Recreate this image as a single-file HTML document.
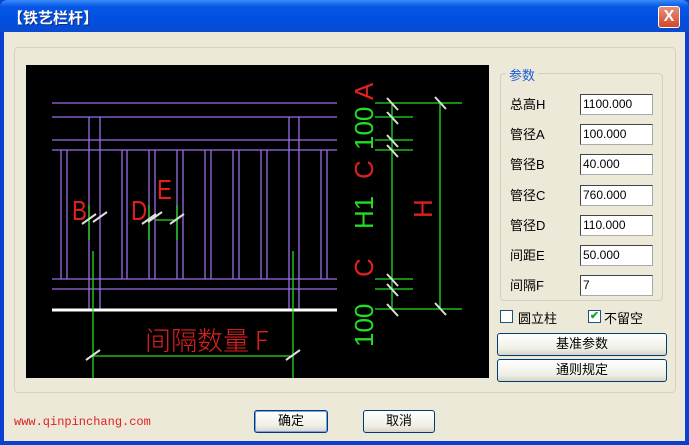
<!DOCTYPE html>
<html><head><meta charset="utf-8"><style>
*{margin:0;padding:0;box-sizing:border-box}
body{width:689px;height:445px;background:#0a3fd0;font-family:"Liberation Sans","Noto Sans CJK SC",sans-serif;font-size:13px;position:relative;overflow:hidden}
.title{position:absolute;left:0;top:0;width:689px;height:32px;background:linear-gradient(#3a8cf8,#0858e8 20%,#0050e0 60%,#0a4ad0);border-radius:7px 7px 0 0}
.title span{position:absolute;left:8px;top:7px;color:#fff;font-weight:bold;font-size:15px;text-shadow:1px 1px #0a2a80}
.close{position:absolute;left:658px;top:6px;width:22px;height:22px;border:1px solid #fff;border-radius:3px;background:linear-gradient(#e8907a,#d4462a);color:#fff;font-weight:bold;font-size:16px;text-align:center;line-height:20px}
.body{position:absolute;left:4px;top:32px;width:681px;height:409px;background:#ece9d8}
.panel{position:absolute;left:10px;top:15px;width:662px;height:346px;border:1px solid #d5d2c2;border-radius:4px}
.cv{position:absolute;left:26px;top:65px;width:463px;height:313px;background:#000}
.lbl{position:absolute;left:510px;font-size:13px}
.in{position:absolute;left:580px;width:73px;height:21px;background:#fff;border:1px solid #7f9db9;border-color:#444 #aaa #aaa #444;font-size:12px;padding:2px 2px;line-height:15px}
.grp{position:absolute;left:500px;top:73px;width:163px;height:228px;border:1px solid #d0d0bf;border-radius:4px}
.btn{position:absolute;border:1px solid #003c74;border-radius:3px;background:linear-gradient(#fff,#f0efe6 70%,#d8d5c6);text-align:center;font-size:13px}
</style></head><body>
<div class="title"><span>【铁艺栏杆】</span><div class="close">X</div></div>
<div class="body"></div>
<div class="panel" style="left:14px;top:47px"></div>
<div class="cv"></div>
<svg style="position:absolute;left:0;top:0" width="689" height="445">
<g stroke="#9a6ee8" stroke-width="1.3">
<line x1="52" y1="103" x2="337" y2="103"/><line x1="52" y1="117" x2="337" y2="117"/>
<line x1="52" y1="140" x2="337" y2="140"/><line x1="52" y1="150" x2="337" y2="150"/>
<line x1="52" y1="279" x2="337" y2="279"/><line x1="52" y1="289" x2="337" y2="289"/>
<line x1="89" y1="117" x2="89" y2="310"/><line x1="100" y1="117" x2="100" y2="310"/>
<line x1="289" y1="117" x2="289" y2="310"/><line x1="299" y1="117" x2="299" y2="310"/>
<g>
<line x1="61" y1="150" x2="61" y2="279"/><line x1="67" y1="150" x2="67" y2="279"/>
<line x1="122" y1="150" x2="122" y2="279"/><line x1="127" y1="150" x2="127" y2="279"/>
<line x1="149" y1="150" x2="149" y2="279"/><line x1="155" y1="150" x2="155" y2="279"/>
<line x1="177" y1="150" x2="177" y2="279"/><line x1="183" y1="150" x2="183" y2="279"/>
<line x1="205" y1="150" x2="205" y2="279"/><line x1="211" y1="150" x2="211" y2="279"/>
<line x1="233" y1="150" x2="233" y2="279"/><line x1="239" y1="150" x2="239" y2="279"/>
<line x1="261" y1="150" x2="261" y2="279"/><line x1="267" y1="150" x2="267" y2="279"/>
<line x1="321" y1="150" x2="321" y2="279"/><line x1="327" y1="150" x2="327" y2="279"/>
</g></g>
<line x1="52" y1="310" x2="337" y2="310" stroke="#fff" stroke-width="3"/>
<g stroke="#22dd22" stroke-width="1.3">
<line x1="93" y1="251" x2="93" y2="378"/><line x1="293" y1="251" x2="293" y2="378"/>
<line x1="93" y1="356" x2="293" y2="356"/>
<line x1="89" y1="205" x2="89" y2="240"/><line x1="149" y1="205" x2="149" y2="240"/><line x1="177" y1="205" x2="177" y2="240"/><line x1="155" y1="220" x2="177" y2="220"/>
<line x1="375" y1="103" x2="462" y2="103"/><line x1="375" y1="117" x2="413" y2="117"/>
<line x1="375" y1="140" x2="413" y2="140"/><line x1="375" y1="150" x2="413" y2="150"/>
<line x1="375" y1="279" x2="413" y2="279"/><line x1="375" y1="289" x2="413" y2="289"/>
<line x1="375" y1="309" x2="462" y2="309"/>
<line x1="392" y1="103" x2="392" y2="309"/><line x1="440" y1="103" x2="440" y2="309"/>
</g>
<g stroke="#ddd" stroke-width="2">
<line x1="86" y1="360" x2="100" y2="350"/><line x1="286" y1="360" x2="300" y2="350"/>
<line x1="82" y1="224" x2="96" y2="214"/><line x1="93" y1="222" x2="107" y2="212"/>
<line x1="142" y1="224" x2="156" y2="214"/><line x1="148" y1="222" x2="162" y2="212"/><line x1="170" y1="224" x2="184" y2="214"/>
<line x1="387" y1="98" x2="398" y2="110"/><line x1="387" y1="112" x2="398" y2="124"/><line x1="387" y1="135" x2="398" y2="147"/><line x1="387" y1="145" x2="398" y2="157"/>
<line x1="387" y1="274" x2="398" y2="286"/><line x1="387" y1="284" x2="398" y2="296"/><line x1="387" y1="304" x2="398" y2="316"/>
<line x1="435" y1="97" x2="446" y2="109"/><line x1="435" y1="303" x2="446" y2="315"/>
</g>
<g font-family="Liberation Sans,Noto Sans CJK SC,sans-serif" font-size="28">
<text x="72" y="220" fill="#e02020" transform="scale(0.8,1)" style="transform-origin:72px 220px">B</text>
<text x="131" y="220" fill="#e02020" transform="scale(0.8,1)" style="transform-origin:131px 220px">D</text>
<text x="157" y="199" fill="#e02020" transform="scale(0.8,1)" style="transform-origin:157px 199px">E</text>
<text x="145" y="350" fill="#e02020" font-size="26" font-family="Noto Sans CJK SC,sans-serif" font-weight="300">间隔数量 F</text>
<g transform="translate(373,347) rotate(-90)" font-size="26">
<text x="0" y="0" fill="#22dd22">100</text><text x="70" y="0" fill="#e02020">C</text><text x="118" y="0" fill="#22dd22">H1</text><text x="168" y="0" fill="#e02020">C</text><text x="197" y="0" fill="#22dd22">100</text><text x="247" y="0" fill="#e02020">A</text>
</g>
<text transform="translate(432,218) rotate(-90)" fill="#e02020" font-size="26">H</text>
</g>
</svg>
<div class="grp"></div>
<div style="position:absolute;left:506px;top:65px;background:#ece9d8;color:#1c5ad8;padding:0 3px;font-size:13px">参数</div>
<div class="lbl" style="top:94px">总高H</div><div class="in" style="top:94px">1100.000</div>
<div class="lbl" style="top:124px">管径A</div><div class="in" style="top:124px">100.000</div>
<div class="lbl" style="top:154px">管径B</div><div class="in" style="top:154px">40.000</div>
<div class="lbl" style="top:185px">管径C</div><div class="in" style="top:185px">760.000</div>
<div class="lbl" style="top:215px">管径D</div><div class="in" style="top:215px">110.000</div>
<div class="lbl" style="top:245px">间距E</div><div class="in" style="top:245px">50.000</div>
<div class="lbl" style="top:275px">间隔F</div><div class="in" style="top:275px">7</div>
<div style="position:absolute;left:500px;top:310px;width:13px;height:13px;border:1px solid #1c5180;background:#fff"></div>
<div style="position:absolute;left:518px;top:308px">圆立柱</div>
<div style="position:absolute;left:588px;top:310px;width:13px;height:13px;border:1px solid #1c5180;background:#fff;color:#21a121;font-size:11px;line-height:11px;text-align:center;font-weight:bold">✔</div>
<div style="position:absolute;left:604px;top:308px">不留空</div>
<div class="btn" style="left:497px;top:333px;width:170px;height:23px;line-height:20px">基准参数</div>
<div class="btn" style="left:497px;top:359px;width:170px;height:23px;line-height:20px">通则规定</div>
<div style="position:absolute;left:14px;top:415px;color:#e02020;font-family:'Liberation Mono',monospace;font-size:12px">www.qinpinchang.com</div>
<div class="btn" style="left:254px;top:410px;width:74px;height:23px;line-height:20px;box-shadow:inset 0 0 0 1px #7aa0e8">确定</div>
<div class="btn" style="left:363px;top:410px;width:72px;height:23px;line-height:20px">取消</div>
</body></html>
